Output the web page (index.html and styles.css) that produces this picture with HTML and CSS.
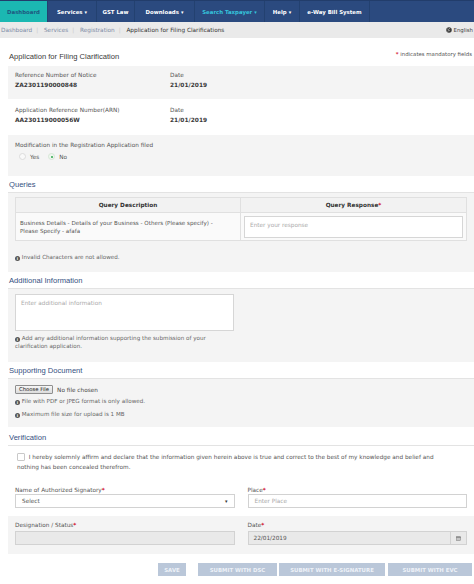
FILE: index.html
```html
<!DOCTYPE html>
<html lang="en">
<head>
<meta charset="utf-8">
<title>Application for Filing Clarifications</title>
<link rel="stylesheet" href="styles.css">
</head>
<body>
<nav class="topnav">
  <a class="nav-item nav-active w48">Dashboard</a>
  <a class="nav-item w49">Services <span class="caret">▾</span></a>
  <a class="nav-item w38">GST Law</a>
  <a class="nav-item w60">Downloads <span class="caret">▾</span></a>
  <a class="nav-item nav-search w70">Search Taxpayer <span class="caret">▾</span></a>
  <a class="nav-item w35">Help <span class="caret">▾</span></a>
  <a class="nav-item w70">e-Way Bill System</a>
</nav>
<div class="crumbs">
  <div class="crumb-list">
    <span class="crumb-link">Dashboard</span><span class="sep">|</span>
    <span class="crumb-link">Services</span><span class="sep">|</span>
    <span class="crumb-link">Registration</span><span class="sep">|</span>
    <span class="crumb-current">Application for Filing Clarifications</span>
  </div>
  <div class="lang">
    <svg class="globe" viewBox="0 0 10 10"><circle cx="5" cy="5" r="4.6" fill="#3a3a3a"/><path d="M2.2 3.2c1 .2 1.4 1 2.2.8.6-.2.3-1.2 1.2-1.5.6-.2 1.3.1 1.5-.5M3 7.8c.2-.9.9-1 .9-1.8 0-.6.8-.7 1.4-.5.7.3.6 1.3 1.5 1.2" stroke="#fff" stroke-width=".8" fill="none"/></svg>
    <span>English</span>
  </div>
</div>

<main class="page">
  <div class="title-row">
    <h1 class="page-title">Application for Filing Clarification</h1>
    <div class="mandatory"><span class="req">*</span> indicates mandatory fields</div>
  </div>

  <div class="info-row gray">
    <div class="info-cell">
      <div class="lbl">Reference Number of Notice</div>
      <div class="val">ZA2301190000848</div>
    </div>
    <div class="info-cell">
      <div class="lbl">Date</div>
      <div class="val">21/01/2019</div>
    </div>
  </div>
  <div class="info-row white arn">
    <div class="info-cell">
      <div class="lbl">Application Reference Number(ARN)</div>
      <div class="val">AA230119000056W</div>
    </div>
    <div class="info-cell">
      <div class="lbl">Date</div>
      <div class="val">21/01/2019</div>
    </div>
  </div>
  <div class="modify gray">
    <div class="lbl">Modification in the Registration Application filed</div>
    <div class="radios">
      <span class="radio"></span><span class="radio-lbl">Yes</span>
      <span class="radio checked"></span><span class="radio-lbl">No</span>
    </div>
  </div>

  <h2 class="section-title">Queries</h2>
  <div class="panel queries-panel">
    <table class="qtable">
      <thead>
        <tr><th class="qcol">Query Description</th><th>Query Response<span class="req">*</span></th></tr>
      </thead>
      <tbody>
        <tr>
          <td class="qdesc">Business Details - Details of your Business - Others (Please specify) - Please Specify - afafa</td>
          <td class="qresp"><div class="textbox resp">Enter your response</div></td>
        </tr>
      </tbody>
    </table>
    <p class="note invalid"><span class="info-ic">i</span> Invalid Characters are not allowed.</p>
  </div>

  <h2 class="section-title">Additional Information</h2>
  <div class="panel addl-panel">
    <div class="textbox addl">Enter additional information</div>
    <p class="note addl-note"><span class="info-ic">i</span> Add any additional information supporting the submission of your clarification application.</p>
  </div>

  <h2 class="section-title">Supporting Document</h2>
  <div class="panel doc-panel">
    <div class="file-row"><span class="file-btn">Choose File</span><span class="file-txt">No file chosen</span></div>
    <p class="note note1"><span class="info-ic">i</span> File with PDF or JPEG format is only allowed.</p>
    <p class="note note2"><span class="info-ic">i</span> Maximum file size for upload is 1 MB</p>
  </div>

  <h2 class="section-title verif-title">Verification</h2>
  <div class="verif">
    <p class="declare"><span class="checkbox"></span> I hereby solemnly affirm and declare that the information given herein above is true and correct to the best of my knowledge and belief and nothing has been concealed therefrom.</p>
    <div class="two-col sign-row">
      <div class="field">
        <div class="lbl">Name of Authorized Signatory<span class="req">*</span></div>
        <div class="input select"><span>Select</span><span class="sel-caret">▾</span></div>
      </div>
      <div class="field">
        <div class="lbl">Place<span class="req">*</span></div>
        <div class="input placeholder">Enter Place</div>
      </div>
    </div>
    <div class="two-col desig-row gray">
      <div class="field">
        <div class="lbl">Designation / Status<span class="req">*</span></div>
        <div class="input disabled"></div>
      </div>
      <div class="field">
        <div class="lbl">Date<span class="req">*</span></div>
        <div class="input disabled date-input">
          <span class="date-val">22/01/2019</span>
          <span class="cal-addon">
            <svg class="cal" viewBox="0 0 8 8"><rect x="0.5" y="1.2" width="7" height="6.3" fill="none" stroke="#777" stroke-width=".9"/><rect x="0.5" y="1.2" width="7" height="1.6" fill="#777"/><path d="M2 4h1M3.5 4h1M5 4h1M2 5.6h1M3.5 5.6h1M5 5.6h1" stroke="#777" stroke-width=".8"/></svg>
          </span>
        </div>
      </div>
    </div>
  </div>

  <div class="actions">
    <button class="btn btn-save">SAVE</button>
    <button class="btn btn-dsc">SUBMIT WITH DSC</button>
    <button class="btn btn-esig">SUBMIT WITH E-SIGNATURE</button>
    <button class="btn btn-evc">SUBMIT WITH EVC</button>
  </div>
</main>
</body>
</html>
```

FILE: styles.css
```css
* { box-sizing: border-box; }

body {
  margin: 0;
  width: 474px;
  height: 584px;
  overflow: hidden;
  background: #fff;
  font-family: "DejaVu Sans", Verdana, sans-serif;
  font-size: 5.75px;
  color: #555;
}

/* ---------- top navigation ---------- */
.topnav {
  display: flex;
  height: 22px;
  background: #2b4a7f;
  border-top: 1px solid #223d6b;
}
.nav-item {
  display: flex;
  align-items: center;
  justify-content: center;
  color: #fff;
  font-weight: bold;
  font-size: 5.4px;
  border-right: 1px solid #234170;
  white-space: nowrap;
}
.nav-item .caret { font-size: 5px; margin-left: 2px; }
.nav-active { background: #1bb8b2; color: #1e5a80; }
.nav-search { color: #35c4dc; }
.w48 { width: 48px; }
.w49 { width: 49px; }
.w38 { width: 38px; }
.w60 { width: 60px; }
.w70 { width: 70px; }
.w35 { width: 35px; }

/* ---------- breadcrumbs ---------- */
.crumbs {
  display: flex;
  justify-content: space-between;
  align-items: center;
  height: 16px;
  background: #eaeaea;
  padding-left: 1px;
  padding-right: 1px;
  white-space: nowrap;
}
.crumb-link { color: #7d8ba6; }
.crumb-current { color: #333; }
.sep { color: #c8c8c8; margin: 0 4px; }
.lang {
  display: flex;
  align-items: center;
  gap: 2px;
  color: #444;
  font-size: 5.4px;
}
.globe { width: 6px; height: 6px; flex: none; }

/* ---------- page ---------- */
.page {
  margin-left: 8px;
  width: 466px;
}
.title-row {
  display: flex;
  justify-content: space-between;
  align-items: flex-start;
  height: 28px;
  padding: 12px 2px 0 1px;
}
.page-title {
  margin: 2px 0 0;
  font-family: "Liberation Sans", Arial, sans-serif;
  font-weight: normal;
  font-size: 7.6px;
  line-height: 9px;
  color: #3a3a3a;
}
.mandatory {
  font-size: 5.4px;
  line-height: 9px;
  color: #555;
}
.req { color: #d0021b; font-weight: bold; }

.gray { background: #f4f4f4; }
.white { background: #fff; }

.lbl { line-height: 8px; color: #555; }
.val {
  margin-top: 2px;
  line-height: 9px;
  font-weight: bold;
  font-size: 5.9px;
  color: #3a3a3a;
}

.info-row {
  display: grid;
  grid-template-columns: 155px 1fr;
  padding: 5px 7px 10px;
  height: 33px;
}
.info-row.arn { padding-top: 7px; height: 36px; }

.modify {
  height: 41px;
  padding: 6px 7px 0;
}
.radios {
  display: flex;
  align-items: center;
  height: 9px;
  margin-top: 3px;
  padding-left: 4px;
}
.radio {
  width: 7px;
  height: 7px;
  border-radius: 50%;
  border: 1px solid #dcdcdc;
  background: #f9f9f9;
  position: relative;
}
.radio.checked { border-color: #d6e6d6; background: #eef7ee; }
.radio.checked::after {
  content: "";
  position: absolute;
  left: 1.5px;
  top: 1.5px;
  width: 2.6px;
  height: 2.6px;
  border-radius: 50%;
  background: #2fa84f;
}
.radio-lbl { margin: 0 9px 0 4px; color: #555; }

/* ---------- sections ---------- */
.section-title {
  margin: 0;
  padding: 4px 1px 3px;
  font-family: "Liberation Sans", Arial, sans-serif;
  font-weight: normal;
  font-size: 7.6px;
  line-height: 9px;
  color: #35507f;
  border-bottom: 1px solid #e3e3e3;
}
.panel { background: #f4f4f4; padding: 0 7px; }

.queries-panel { padding-top: 4px; height: 79px; }
.qtable {
  width: 452px;
  border-collapse: collapse;
  background: #fafafa;
}
.qtable th {
  height: 15px;
  border: 1px solid #e0e0e0;
  background: #f2f2f2;
  font-weight: bold;
  color: #333;
  font-size: 5.75px;
  text-align: center;
  padding: 0;
}
.qtable .qcol { width: 225px; }
.qtable td {
  height: 28px;
  border: 1px solid #e0e0e0;
  vertical-align: middle;
  padding: 0;
}
.qdesc {
  padding: 0 10px 0 4px !important;
  font-size: 5.6px;
  line-height: 8px;
  color: #555;
}
.qresp { padding: 0 3px !important; }
.textbox {
  background: #fff;
  border: 1px solid #d6d6d6;
  color: #aaa;
  padding: 4px 5px;
  line-height: 8px;
}
.textbox.resp { height: 22px; }

.note {
  margin: 0;
  line-height: 8px;
  color: #666;
  font-size: 5.6px;
}
.info-ic {
  display: inline-block;
  width: 5px;
  height: 5px;
  border-radius: 50%;
  background: #555;
  color: #fff;
  font-size: 4px;
  line-height: 5px;
  text-align: center;
  font-weight: bold;
  vertical-align: -0.5px;
}
.note.invalid { margin-top: 12px; }

.addl-panel { padding-top: 5px; height: 73px; }
.textbox.addl { width: 219px; height: 37px; }
.addl-note { width: 219px; margin-top: 3px; }

.doc-panel { padding-top: 6px; height: 48px; }
.file-row { display: flex; align-items: center; height: 9px; }
.file-btn {
  display: inline-block;
  height: 9px;
  line-height: 7px;
  padding: 0 3px;
  border: 1px solid #8f8f8f;
  border-radius: 1px;
  background: linear-gradient(#f6f6f6, #dcdcdc);
  color: #222;
  font-size: 5.3px;
}
.file-txt { margin-left: 4px; color: #444; }
.note1 { margin-top: 3px; }
.note2 { margin-top: 5px; }

.verif-title { padding-top: 6px; }

.verif { background: #fff; }
.declare {
  margin: 0;
  padding: 6px 24px 0 9px;
  line-height: 10px;
  color: #555;
}
.checkbox {
  display: inline-block;
  width: 8px;
  height: 8px;
  border: 1px solid #c9c9c9;
  background: #fff;
  border-radius: 1px;
  vertical-align: -2px;
  margin-right: 2px;
}
.two-col {
  display: grid;
  grid-template-columns: 1fr 1fr;
  column-gap: 13px;
  padding: 0 7px;
}
.sign-row { margin-top: 14px; height: 30px; }
.desig-row { padding-top: 5px; height: 38px; }
.desig-row .input { margin-top: 2px; }

.input {
  height: 14px;
  border: 1px solid #d2d2d2;
  background: #fff;
  display: flex;
  align-items: center;
  padding: 0 6px;
  color: #555;
}
.placeholder { color: #aaa; }
.select { justify-content: space-between; }
.sel-caret { font-size: 5px; color: #333; }
.disabled { background: #e9e9e9; }
.date-input { padding-right: 0; justify-content: space-between; }
.date-val { color: #555; margin-left: -1px; }
.cal-addon {
  width: 16px;
  height: 100%;
  border-left: 1px solid #d2d2d2;
  display: flex;
  align-items: center;
  justify-content: center;
}
.cal { width: 5px; height: 5px; }

/* ---------- buttons ---------- */
.actions {
  display: flex;
  justify-content: flex-end;
  margin-top: 9px;
  padding-right: 2px;
}
.btn {
  height: 13px;
  padding: 0;
  border: none;
  background: #bac7d9;
  color: #eef2f8;
  font-family: "DejaVu Sans", Verdana, sans-serif;
  font-weight: bold;
  font-size: 5.4px;
  text-align: center;
}
.btn-save { width: 28px; margin-right: 12px; }
.btn-dsc { width: 79px; margin-right: 2px; }
.btn-esig { width: 106px; margin-right: 3px; }
.btn-evc { width: 84px; }
```
